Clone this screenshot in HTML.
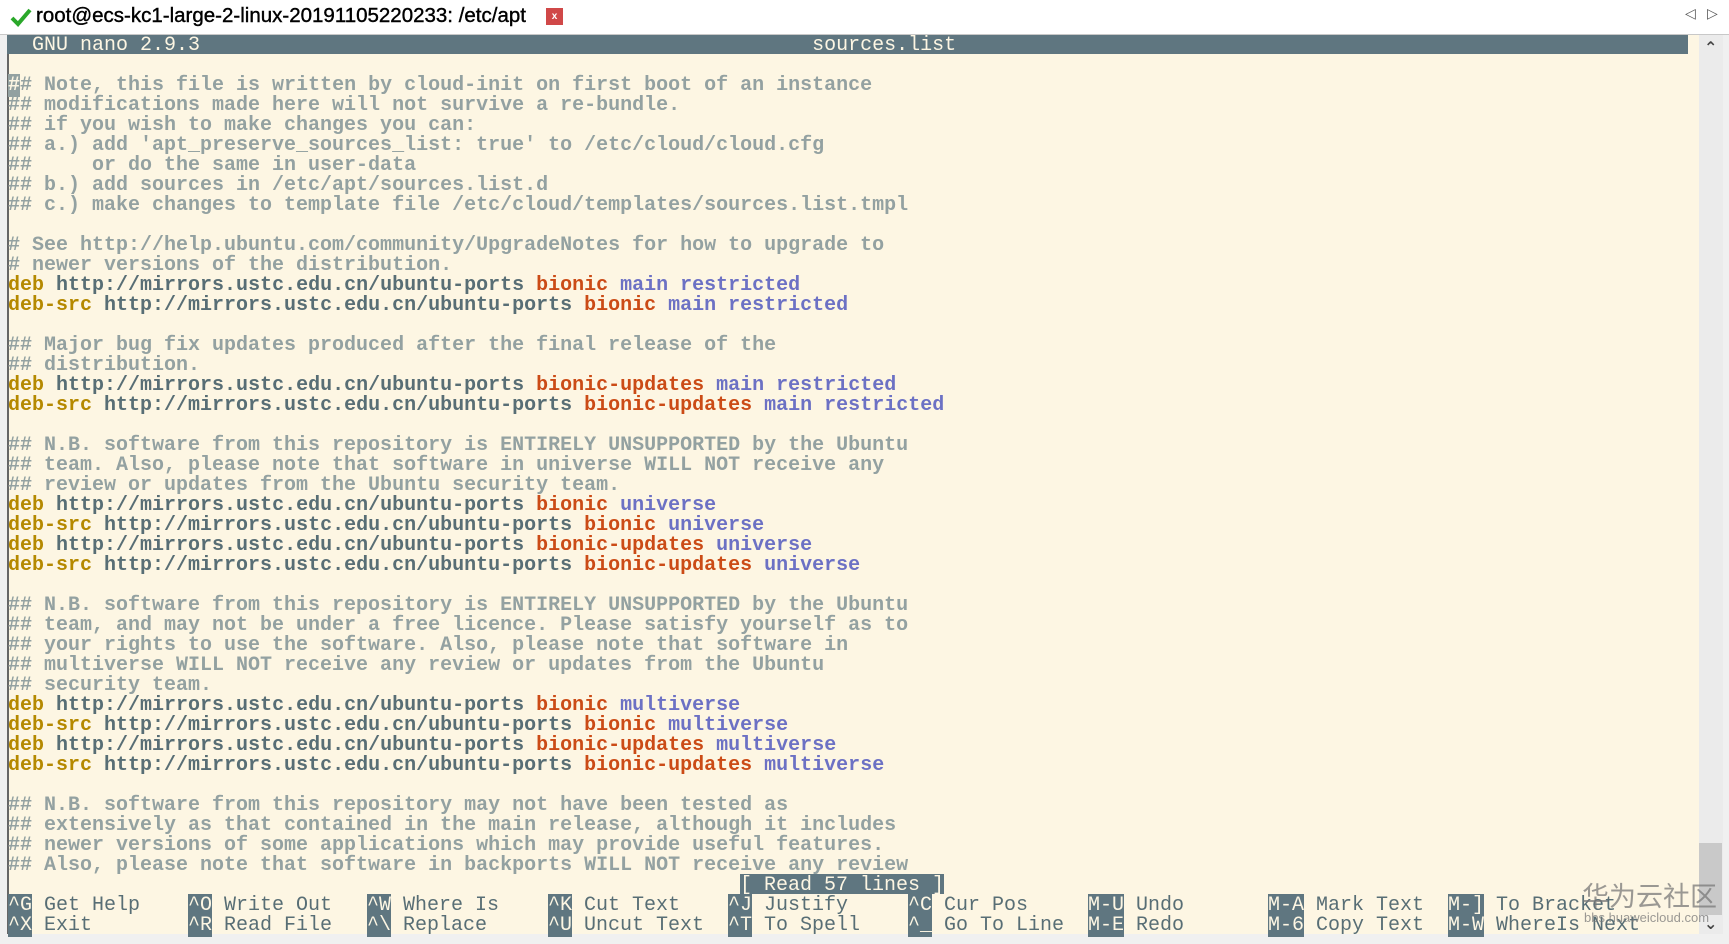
<!DOCTYPE html>
<html><head><meta charset="utf-8"><style>
html,body{margin:0;padding:0;width:1729px;height:944px;overflow:hidden;background:#f0f0f0;}
#tab{position:absolute;left:0;top:0;width:1729px;height:34px;background:#fff;border-bottom:1px solid #c8c8c8;}
#tabt{position:absolute;left:36px;top:4px;font:20.5px "Liberation Sans",sans-serif;color:#000;-webkit-text-stroke:0.4px #000;}
#term{position:absolute;left:7px;top:35px;width:1692px;height:899px;background:#fdf6e3;border-left:2px solid #666;}
#sb{position:absolute;left:1699px;top:35px;width:24px;height:899px;background:#ebebeb;}
#thumb{position:absolute;left:1699px;top:843px;width:23px;height:72px;background:#c9c9c9;}
.r{position:absolute;left:8px;height:20px;line-height:20px;font:bold 20px "Liberation Mono",monospace;white-space:pre;color:#93a1a1;}
.n{font-weight:normal;}
.u{color:#586e75}.d{color:#b58900}.b{color:#cb4b16}.v{color:#6c71c4}
.k{background:#5f7680;color:#fdf6e3;font-weight:normal;}
.s{position:absolute;height:20px;line-height:20px;font:20px "Liberation Mono",monospace;white-space:pre;color:#586e75;}
</style></head><body>
<div id="tab"><svg style="position:absolute;left:10px;top:7px" width="22" height="20"><path d="M2 11 L8 17 L20 3" stroke="#2aa82a" stroke-width="4" fill="none"/></svg>
<div id="tabt">root@ecs-kc1-large-2-linux-20191105220233: /etc/apt</div>
<div style="position:absolute;left:546px;top:8px;width:17px;height:17px;background:#d04848;color:#fff;font:bold 10px 'Liberation Sans',sans-serif;text-align:center;line-height:17px">x</div>
<div style="position:absolute;left:1685px;top:6px;font:14px 'DejaVu Sans',sans-serif;color:#555">◁</div>
<div style="position:absolute;left:1707px;top:6px;font:14px 'DejaVu Sans',sans-serif;color:#555">▷</div>
</div>
<div id="term"></div>
<div id="sb"></div><div id="thumb"></div>
<div style="position:absolute;left:1704px;top:38px;font:bold 16px 'DejaVu Sans',sans-serif;color:#444">⌃</div>
<div style="position:absolute;left:1704px;top:914px;font:bold 16px 'DejaVu Sans',sans-serif;color:#444">⌄</div>
<div style="position:absolute;left:7px;top:35px;width:1681px;height:19px;background:#5f7680"></div>
<div class="r n" style="top:34px;color:#fdf6e3">  GNU nano 2.9.3                                                   sources.list</div>
<div class="r" style="top:74px"><span style="background:#93a1a1;color:#fdf6e3">#</span># Note, this file is written by cloud-init on first boot of an instance</div>
<div class="r" style="top:94px">## modifications made here will not survive a re-bundle.</div>
<div class="r" style="top:114px">## if you wish to make changes you can:</div>
<div class="r" style="top:134px">## a.) add 'apt_preserve_sources_list: true' to /etc/cloud/cloud.cfg</div>
<div class="r" style="top:154px">##     or do the same in user-data</div>
<div class="r" style="top:174px">## b.) add sources in /etc/apt/sources.list.d</div>
<div class="r" style="top:194px">## c.) make changes to template file /etc/cloud/templates/sources.list.tmpl</div>
<div class="r" style="top:234px"># See http://help.ubuntu.com/community/UpgradeNotes for how to upgrade to</div>
<div class="r" style="top:254px"># newer versions of the distribution.</div>
<div class="r" style="top:274px"><span class="d">deb</span> <span class="u">http://mirrors.ustc.edu.cn/ubuntu-ports</span> <span class="b">bionic</span> <span class="v">main restricted</span></div>
<div class="r" style="top:294px"><span class="d">deb-src</span> <span class="u">http://mirrors.ustc.edu.cn/ubuntu-ports</span> <span class="b">bionic</span> <span class="v">main restricted</span></div>
<div class="r" style="top:334px">## Major bug fix updates produced after the final release of the</div>
<div class="r" style="top:354px">## distribution.</div>
<div class="r" style="top:374px"><span class="d">deb</span> <span class="u">http://mirrors.ustc.edu.cn/ubuntu-ports</span> <span class="b">bionic-updates</span> <span class="v">main restricted</span></div>
<div class="r" style="top:394px"><span class="d">deb-src</span> <span class="u">http://mirrors.ustc.edu.cn/ubuntu-ports</span> <span class="b">bionic-updates</span> <span class="v">main restricted</span></div>
<div class="r" style="top:434px">## N.B. software from this repository is ENTIRELY UNSUPPORTED by the Ubuntu</div>
<div class="r" style="top:454px">## team. Also, please note that software in universe WILL NOT receive any</div>
<div class="r" style="top:474px">## review or updates from the Ubuntu security team.</div>
<div class="r" style="top:494px"><span class="d">deb</span> <span class="u">http://mirrors.ustc.edu.cn/ubuntu-ports</span> <span class="b">bionic</span> <span class="v">universe</span></div>
<div class="r" style="top:514px"><span class="d">deb-src</span> <span class="u">http://mirrors.ustc.edu.cn/ubuntu-ports</span> <span class="b">bionic</span> <span class="v">universe</span></div>
<div class="r" style="top:534px"><span class="d">deb</span> <span class="u">http://mirrors.ustc.edu.cn/ubuntu-ports</span> <span class="b">bionic-updates</span> <span class="v">universe</span></div>
<div class="r" style="top:554px"><span class="d">deb-src</span> <span class="u">http://mirrors.ustc.edu.cn/ubuntu-ports</span> <span class="b">bionic-updates</span> <span class="v">universe</span></div>
<div class="r" style="top:594px">## N.B. software from this repository is ENTIRELY UNSUPPORTED by the Ubuntu</div>
<div class="r" style="top:614px">## team, and may not be under a free licence. Please satisfy yourself as to</div>
<div class="r" style="top:634px">## your rights to use the software. Also, please note that software in</div>
<div class="r" style="top:654px">## multiverse WILL NOT receive any review or updates from the Ubuntu</div>
<div class="r" style="top:674px">## security team.</div>
<div class="r" style="top:694px"><span class="d">deb</span> <span class="u">http://mirrors.ustc.edu.cn/ubuntu-ports</span> <span class="b">bionic</span> <span class="v">multiverse</span></div>
<div class="r" style="top:714px"><span class="d">deb-src</span> <span class="u">http://mirrors.ustc.edu.cn/ubuntu-ports</span> <span class="b">bionic</span> <span class="v">multiverse</span></div>
<div class="r" style="top:734px"><span class="d">deb</span> <span class="u">http://mirrors.ustc.edu.cn/ubuntu-ports</span> <span class="b">bionic-updates</span> <span class="v">multiverse</span></div>
<div class="r" style="top:754px"><span class="d">deb-src</span> <span class="u">http://mirrors.ustc.edu.cn/ubuntu-ports</span> <span class="b">bionic-updates</span> <span class="v">multiverse</span></div>
<div class="r" style="top:794px">## N.B. software from this repository may not have been tested as</div>
<div class="r" style="top:814px">## extensively as that contained in the main release, although it includes</div>
<div class="r" style="top:834px">## newer versions of some applications which may provide useful features.</div>
<div class="r" style="top:854px">## Also, please note that software in backports WILL NOT receive any review</div>
<div class="s" style="top:874px;left:740px;background:#5f7680;color:#fdf6e3">[ Read 57 lines ]</div>
<div class="s" style="top:894px;left:8px"><span class="k">^G</span> Get Help</div>
<div class="s" style="top:914px;left:8px"><span class="k">^X</span> Exit</div>
<div class="s" style="top:894px;left:188px"><span class="k">^O</span> Write Out</div>
<div class="s" style="top:914px;left:188px"><span class="k">^R</span> Read File</div>
<div class="s" style="top:894px;left:367px"><span class="k">^W</span> Where Is</div>
<div class="s" style="top:914px;left:367px"><span class="k">^\</span> Replace</div>
<div class="s" style="top:894px;left:548px"><span class="k">^K</span> Cut Text</div>
<div class="s" style="top:914px;left:548px"><span class="k">^U</span> Uncut Text</div>
<div class="s" style="top:894px;left:728px"><span class="k">^J</span> Justify</div>
<div class="s" style="top:914px;left:728px"><span class="k">^T</span> To Spell</div>
<div class="s" style="top:894px;left:908px"><span class="k">^C</span> Cur Pos</div>
<div class="s" style="top:914px;left:908px"><span class="k">^_</span> Go To Line</div>
<div class="s" style="top:894px;left:1088px"><span class="k">M-U</span> Undo</div>
<div class="s" style="top:914px;left:1088px"><span class="k">M-E</span> Redo</div>
<div class="s" style="top:894px;left:1268px"><span class="k">M-A</span> Mark Text</div>
<div class="s" style="top:914px;left:1268px"><span class="k">M-6</span> Copy Text</div>
<div class="s" style="top:894px;left:1448px"><span class="k">M-]</span> To Bracket</div>
<div class="s" style="top:914px;left:1448px"><span class="k">M-W</span> WhereIs Next</div>
<div style="position:absolute;left:1582px;top:880px;font:27px 'Noto Sans CJK SC',sans-serif;color:rgba(120,120,120,0.75);line-height:30px">华为云社区</div>
<div style="position:absolute;left:1584px;top:910px;font:13px 'Liberation Sans',sans-serif;color:rgba(120,120,120,0.75)">bbs.huaweicloud.com</div>
</body></html>
